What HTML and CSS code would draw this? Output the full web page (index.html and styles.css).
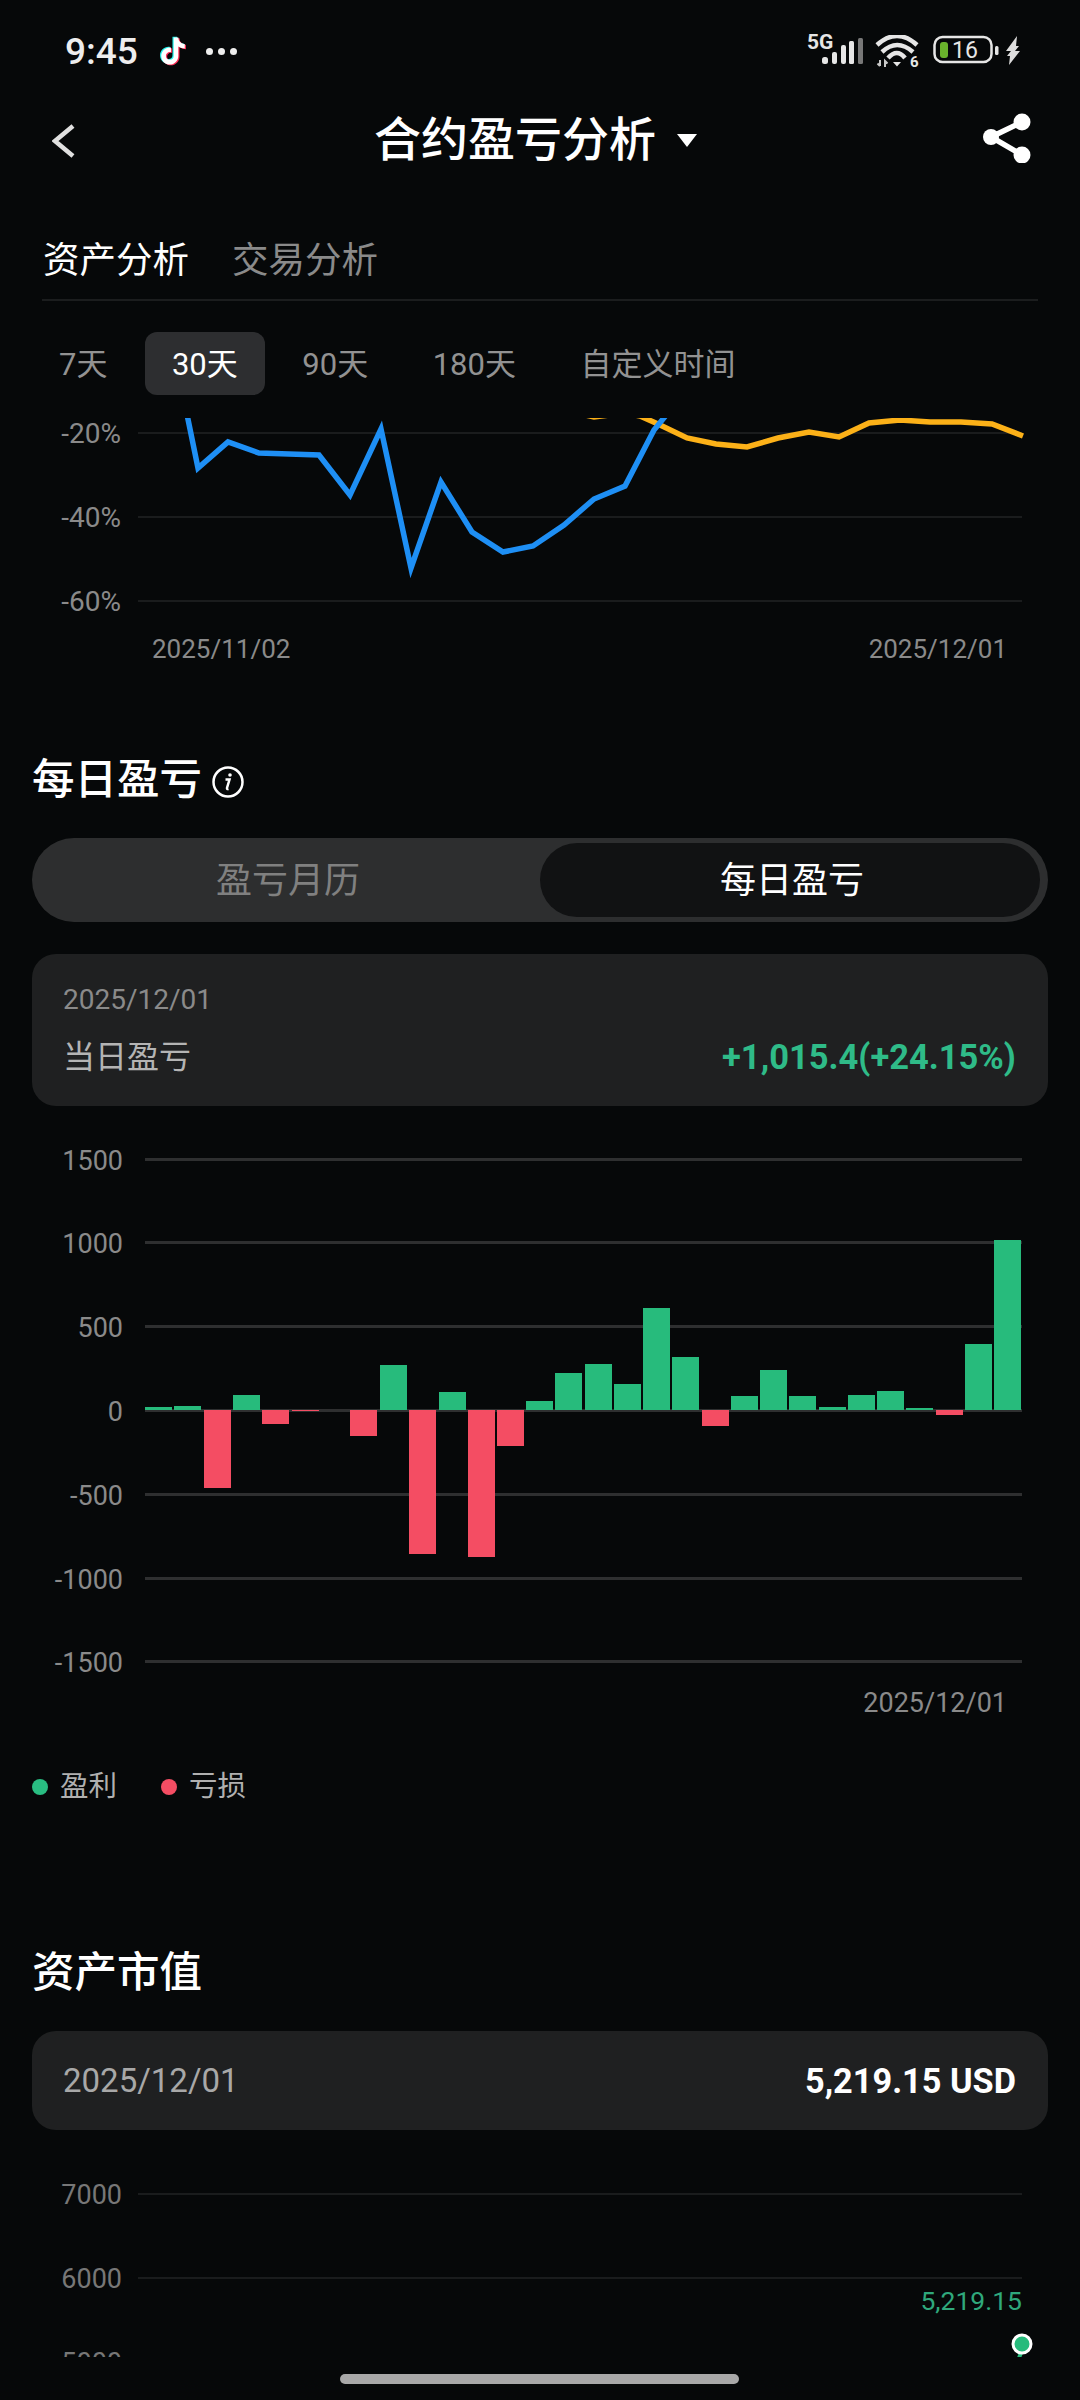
FILE: index.html
```html
<!DOCTYPE html>
<html lang="zh-CN">
<head>
    <meta charset="UTF-8">
    <meta name="viewport" content="width=device-width, initial-scale=1.0">
    <title>合约盈亏分析</title>
    <link rel="stylesheet" href="styles.css">
</head>
<body>
    <div class="status">
        <div class="status-left">
            <span class="clock">9:45</span>
            <svg class="tiktok" viewBox="0 0 24 24" width="36" height="36">
                <path class="tk-cyan" d="M16.6 5.82A4.28 4.28 0 0 1 15.54 3h-3.09v12.4a2.59 2.59 0 0 1-2.59 2.5c-1.42 0-2.6-1.16-2.6-2.6c0-1.72 1.66-3.01 3.37-2.48V9.66c-3.45-.46-6.47 2.22-6.47 5.64c0 3.33 2.76 5.7 5.69 5.7c3.14 0 5.69-2.55 5.69-5.7V9.01a7.35 7.35 0 0 0 4.3 1.38V7.3s-1.88.09-3.24-1.48z" transform="translate(-.8 -.5)"/>
                <path class="tk-red" d="M16.6 5.82A4.28 4.28 0 0 1 15.54 3h-3.09v12.4a2.59 2.59 0 0 1-2.59 2.5c-1.42 0-2.6-1.16-2.6-2.6c0-1.72 1.66-3.01 3.37-2.48V9.66c-3.45-.46-6.47 2.22-6.47 5.64c0 3.33 2.76 5.7 5.69 5.7c3.14 0 5.69-2.55 5.69-5.7V9.01a7.35 7.35 0 0 0 4.3 1.38V7.3s-1.88.09-3.24-1.48z" transform="translate(.8 .5)"/>
                <path class="tk-white" d="M16.6 5.82A4.28 4.28 0 0 1 15.54 3h-3.09v12.4a2.59 2.59 0 0 1-2.59 2.5c-1.42 0-2.6-1.16-2.6-2.6c0-1.72 1.66-3.01 3.37-2.48V9.66c-3.45-.46-6.47 2.22-6.47 5.64c0 3.33 2.76 5.7 5.69 5.7c3.14 0 5.69-2.55 5.69-5.7V9.01a7.35 7.35 0 0 0 4.3 1.38V7.3s-1.88.09-3.24-1.48z"/>
            </svg>
            <span class="dots"><i></i><i></i><i></i></span>
        </div>
        <div class="status-right">
            <svg class="st-signal" viewBox="0 -4 58 38" width="58" height="38">
                <text class="net" x="0" y="16">5G</text>
                <rect class="sig" x="15" y="24" width="6" height="7" rx="2.5"/>
                <rect class="sig" x="25" y="19" width="5" height="12" rx="2"/>
                <rect class="sig" x="34" y="12" width="5" height="19" rx="2"/>
                <rect class="sig" x="42" y="8" width="5" height="23" rx="1.5"/>
                <rect class="sig off" x="51" y="5" width="5" height="26" rx="1.5"/>
            </svg>
            <svg class="st-wifi" viewBox="0 0 44 36" width="44" height="36">
                <path class="wifi" d="M2 10Q22 -8 42 10"/>
                <path class="wifi" d="M7 17Q22 3 38 17"/>
                <path class="wifi" d="M13 23Q22 13 30 23"/>
                <path class="wifi-dot" d="M18 27h8l-4 4.500z"/>
                <path class="wifi-arrow" d="M5 25v6M2.500 28.500L5 31M10 32v-6l2.500 2.500"/>
                <text class="wifi-num" x="35" y="32">6</text>
            </svg>
            <svg class="st-batt" viewBox="0 0 66 30" width="66" height="30">
                <rect class="batt" x="1.500" y="2" width="57" height="25" rx="8"/>
                <rect class="batt-fill" x="7" y="7" width="8" height="16" rx="3"/>
                <text class="batt-num" x="19" y="23">16</text>
                <rect class="batt-cap" x="62" y="11" width="3.500" height="9" rx="1.500"/>
            </svg>
            <svg class="st-bolt" viewBox="0 0 17 29" width="17" height="29">
                <path class="bolt" d="M12 0L1 15h5l-4 5h3l-1 9 11-14h-5l4-5h-3z"/>
            </svg>
        </div>
    </div>

    <div class="nav">
        <svg class="nav-back" viewBox="0 0 24 34" width="24" height="34"><path d="M21 2L3 17l18 15"/></svg>
        <div class="nav-title">
            <h1>合约盈亏分析</h1>
            <span class="caret"></span>
        </div>
        <svg class="nav-share" viewBox="0 0 48 50" width="48" height="50">
            <path d="M39 9L8 24l31 18"/>
            <circle cx="39" cy="9" r="8.500"/>
            <circle cx="8" cy="24" r="8"/>
            <circle cx="39" cy="42" r="8.500"/>
        </svg>
    </div>

    <div class="tabs">
        <span class="tab active">资产分析</span>
        <span class="tab">交易分析</span>
    </div>

    <div class="ranges">
        <span class="range">7天</span>
        <span class="range active">30天</span>
        <span class="range">90天</span>
        <span class="range">180天</span>
        <span class="range">自定义时间</span>
    </div>

    <!-- yield curve -->
    <div class="plot trend">
        <div class="axis-row first"><span class="axis-label">-20%</span><span class="axis-line"></span></div>
        <div class="axis-row"><span class="axis-label">-40%</span><span class="axis-line"></span></div>
        <div class="axis-row"><span class="axis-label">-60%</span><span class="axis-line"></span></div>
        <svg class="trend-lines" viewBox="0 418 1080 240">
            <polyline class="line-orange" points="564,410 594,417 625,413 640,416 658,424 687,438 716,444 747,447 778,438 809,432 839,437 869,423 900,420 930,422 961,422 992,424 1023,436"/>
            <polyline class="line-blue" points="182,390 198,468 228,442 259,453 289,454 319,455 350,495 381,429 411,568 441,482 472,532 503,552 533,546 564,525 594,499 625,486 654,430 672,408"/>
        </svg>
    </div>
    <div class="trend-dates">
        <span>2025/11/02</span>
        <span>2025/12/01</span>
    </div>

    <h2 class="section-title daily-title">每日盈亏
        <svg class="info" viewBox="0 0 32 32" width="32" height="32">
            <circle cx="16" cy="16" r="14.500"/>
            <path d="M13.500 13.500h4l-2.500 8.500q-.3 1.500 1.500 1"/>
            <circle class="info-dot" cx="18" cy="9" r="1.800"/>
        </svg>
    </h2>

    <div class="toggle">
        <span class="toggle-item first">盈亏月历</span>
        <span class="toggle-item active">每日盈亏</span>
    </div>

    <div class="card day-card">
        <div class="day-date">2025/12/01</div>
        <div class="card-row">
            <span class="day-label">当日盈亏</span>
            <span class="day-value">+1,015.4(+24.15%)</span>
        </div>
    </div>

    <!-- daily bars -->
    <div class="plot bars">
        <div class="axis-row first"><span class="axis-label">1500</span><span class="axis-line"></span></div>
        <div class="axis-row"><span class="axis-label">1000</span><span class="axis-line"></span></div>
        <div class="axis-row"><span class="axis-label">500</span><span class="axis-line"></span></div>
        <div class="axis-row"><span class="axis-label">0</span><span class="axis-line"></span></div>
        <div class="axis-row"><span class="axis-label">-500</span><span class="axis-line"></span></div>
        <div class="axis-row"><span class="axis-label">-1000</span><span class="axis-line"></span></div>
        <div class="axis-row"><span class="axis-label">-1500</span><span class="axis-line"></span></div>
        <svg class="bar-svg" viewBox="0 1106 1080 571">
            <g class="gain">
                <rect x="145" y="1407" width="27" height="3"/>
                <rect x="174" y="1406" width="27" height="4"/>
                <rect x="233" y="1395" width="27" height="15"/>
                <rect x="380" y="1365" width="27" height="45"/>
                <rect x="439" y="1392" width="27" height="18"/>
                <rect x="526" y="1401" width="27" height="9"/>
                <rect x="555" y="1373" width="27" height="37"/>
                <rect x="585" y="1364" width="27" height="46"/>
                <rect x="614" y="1384" width="27" height="26"/>
                <rect x="643" y="1308" width="27" height="102"/>
                <rect x="672" y="1357" width="27" height="53"/>
                <rect x="731" y="1396" width="27" height="14"/>
                <rect x="760" y="1370" width="27" height="40"/>
                <rect x="789" y="1396" width="27" height="14"/>
                <rect x="819" y="1407" width="27" height="3"/>
                <rect x="848" y="1395" width="27" height="15"/>
                <rect x="877" y="1391" width="27" height="19"/>
                <rect x="906" y="1408" width="27" height="2"/>
                <rect x="965" y="1344" width="27" height="66"/>
                <rect x="994" y="1240" width="27" height="170"/>
            </g>
            <g class="loss">
                <rect x="204" y="1410" width="27" height="78"/>
                <rect x="262" y="1410" width="27" height="14"/>
                <rect x="292" y="1410" width="27" height="1"/>
                <rect x="350" y="1410" width="27" height="26"/>
                <rect x="409" y="1410" width="27" height="144"/>
                <rect x="468" y="1410" width="27" height="147"/>
                <rect x="497" y="1410" width="27" height="36"/>
                <rect x="702" y="1410" width="27" height="16"/>
                <rect x="936" y="1410" width="27" height="5"/>
            </g>
        </svg>
    </div>
    <div class="bars-date">2025/12/01</div>

    <div class="legend">
        <span class="legend-item"><i class="legend-dot green"></i>盈利</span>
        <span class="legend-item"><i class="legend-dot red"></i>亏损</span>
    </div>

    <h2 class="section-title value-title">资产市值</h2>

    <div class="card value-card">
        <span class="value-date">2025/12/01</span>
        <span class="value-amount">5,219.15 USD</span>
    </div>

    <!-- asset value -->
    <div class="plot worth">
        <div class="axis-row first"><span class="axis-label">7000</span><span class="axis-line"></span></div>
        <div class="axis-row"><span class="axis-label">6000</span><span class="axis-line"></span></div>
        <div class="axis-row"><span class="axis-label">5000</span><span class="axis-line"></span></div>
        <span class="worth-tip">5,219.15</span>
        <svg class="worth-dot" viewBox="0 0 30 36" width="30" height="36">
            <path d="M15 20l-6 16"/>
            <circle cx="15" cy="14" r="9"/>
        </svg>
    </div>

    <div class="home-bar"></div>
</body>
</html>
```

FILE: styles.css
```css
* {
    box-sizing: border-box;
}
html, body {
    margin: 0;
    padding: 0;
}
body {
    width: 1080px;
    height: 2400px;
    position: relative;
    overflow: hidden;
    background-color: #060809;
    color: #fff;
    font-family: Roboto, "Noto Sans CJK SC", sans-serif;
}

/* status bar */
.status {
    height: 100px;
    display: flex;
    justify-content: space-between;
    align-items: center;
    padding: 0 58px 0 65px;
}
.status-left {
    display: flex;
    align-items: center;
    padding-top: 2px;
}
.clock {
    font-size: 37px;
    font-weight: 500;
    color: #eee;
}
.tiktok {
    margin-left: 17px;
}
.tk-cyan {
    fill: #25f4ee;
}
.tk-red {
    fill: #fe2c55;
}
.tk-white {
    fill: #fff;
}
.dots {
    display: flex;
    gap: 5px;
    margin-left: 15px;
}
.dots i {
    width: 7px;
    height: 7px;
    border-radius: 50%;
    background-color: #eee;
}
.status-right {
    display: flex;
    align-items: center;
}
.st-signal {
    margin-bottom: 4px;
}
.st-wifi {
    margin: 6px 0 0 10px;
}
.st-batt {
    margin-left: 14px;
}
.st-bolt {
    margin-left: 6px;
}
.net {
    font-family: Roboto, sans-serif;
    font-size: 21px;
    font-weight: 700;
    fill: #e6e6e6;
}
.sig {
    fill: #e6e6e6;
}
.sig.off {
    fill: #777;
}
.wifi {
    fill: none;
    stroke: #e6e6e6;
    stroke-width: 4.5;
}
.wifi-dot {
    fill: #e6e6e6;
}
.wifi-arrow {
    fill: none;
    stroke: #c8c8c8;
    stroke-width: 2;
}
.wifi-num {
    font-family: Roboto, sans-serif;
    font-size: 15px;
    font-weight: 700;
    fill: #e6e6e6;
}
.batt {
    fill: none;
    stroke: #e6e6e6;
    stroke-width: 2.5;
}
.batt-fill {
    fill: #6ab42c;
}
.batt-num {
    font-family: Roboto, sans-serif;
    font-size: 23px;
    fill: #e6e6e6;
}
.batt-cap {
    fill: #e6e6e6;
}
.bolt {
    fill: #ddd;
}

/* nav */
.nav {
    height: 80px;
    display: grid;
    grid-template-columns: 1fr auto 1fr;
    align-items: center;
    padding: 0 49px 0 52px;
}
.nav-back {
    margin-top: 2px;
    fill: none;
    stroke: #e0e0e0;
    stroke-width: 4.5;
}
.nav-title {
    display: flex;
    align-items: center;
    gap: 21px;
    margin-right: 12px;
}
.nav-title h1 {
    margin: 0;
    font-size: 47px;
    font-weight: 500;
    line-height: 60px;
}
.caret {
    width: 0;
    height: 0;
    border-left: 10px solid transparent;
    border-right: 10px solid transparent;
    border-top: 13px solid #fff;
}
.nav-share {
    justify-self: end;
    margin-top: -4px;
    fill: #fff;
}
.nav-share path {
    fill: none;
    stroke: #fff;
    stroke-width: 5.5;
}

/* tabs */
.tabs {
    display: flex;
    gap: 43px;
    margin: 0 42px;
    padding: 56px 0 13px 1px;
    border-bottom: 2px solid #1b1d1e;
}
.tab {
    font-size: 36.5px;
    line-height: 50px;
    color: #8a8a8a;
}
.tab.active {
    color: #fff;
}
.ranges {
    display: flex;
    gap: 10.5px;
    height: 63px;
    margin-top: 31px;
    padding-left: 32px;
}
.range {
    padding: 0 27px;
    border-radius: 12px;
    font-size: 31px;
    line-height: 66px;
    color: #929292;
}
.range.active {
    background-color: #2d2e30;
    color: #fff;
}

/* charts */
.plot {
    position: relative;
}
.axis-row {
    display: flex;
    align-items: flex-end;
    height: 84px;
    padding-right: 58px;
}
.axis-label {
    width: 121px;
    height: 30px;
    font-size: 28px;
    line-height: 32px;
    text-align: right;
    color: #8a8a8a;
}
.axis-line {
    flex: 1;
    height: 2px;
    margin: 0 0 14px 17px;
    background-color: #1a1c1d;
}
.trend .first {
    height: 53px;
}
.trend-lines {
    position: absolute;
    left: 0;
    top: 23px;
    width: 1080px;
    height: 240px;
}
.trend-lines polyline {
    fill: none;
    stroke-width: 5.5;
    stroke-miterlimit: 8;
}
.line-blue {
    stroke: #1e8ff5;
}
.line-orange {
    stroke: #fcb118;
}
.trend-dates {
    display: flex;
    justify-content: space-between;
    margin-top: 17.5px;
    padding: 0 73px 0 152px;
    font-size: 26px;
    line-height: 30px;
    color: #8a8a8a;
}

.section-title {
    display: flex;
    align-items: center;
    margin: 0;
    padding-left: 32px;
    font-size: 42.5px;
    font-weight: 500;
    line-height: 60px;
}
.daily-title {
    margin-top: 86px;
}
.info {
    margin: 4px 0 0 10px;
    fill: none;
    stroke: #fff;
    stroke-width: 2.5;
}
.info-dot {
    fill: #fff;
    stroke: none;
}

.toggle {
    display: flex;
    align-items: center;
    height: 84px;
    margin: 28.5px 32px 0;
    border-radius: 42px;
    background-color: #2d2e2f;
}
.toggle-item {
    height: 74px;
    padding: 2px 0 0 4px;
    text-align: center;
    font-size: 36px;
    line-height: 72px;
    color: #808080;
}
.toggle-item.first {
    width: 508px;
}
.toggle-item.active {
    width: 500px;
    border-radius: 37px;
    background-color: #111213;
    color: #fff;
}

.card {
    margin: 0 32px;
    border-radius: 24px;
    background-color: #1f2021;
}
.day-card {
    height: 152px;
    margin-top: 31.5px;
    padding: 31px 32px 0 31px;
}
.day-date {
    font-size: 28px;
    line-height: 30px;
    color: #8a8a8a;
}
.card-row {
    display: flex;
    justify-content: space-between;
    margin-top: 19px;
    line-height: 46px;
}
.day-label {
    font-size: 32px;
    color: #b4b4b4;
}
.day-value {
    font-size: 34.5px;
    font-weight: 700;
    color: #2fbb88;
}

.bars .first {
    height: 68px;
}
.bars .axis-row:not(.first) {
    height: 83.83px;
}
.bars .axis-label {
    width: 123px;
    font-size: 27px;
    line-height: 35px;
}
.bars .axis-line {
    height: 3px;
    margin: 0 0 13px 22px;
    background-color: #2e2f30;
}
.bar-svg {
    position: absolute;
    left: 0;
    top: 0;
    width: 1080px;
    height: 571px;
}
.gain {
    fill: #27bb7c;
}
.loss {
    fill: #f44d63;
}
.bars-date {
    margin-top: 12px;
    padding-right: 73px;
    text-align: right;
    font-size: 27px;
    line-height: 30px;
    color: #8a8a8a;
}

.legend {
    display: flex;
    gap: 44px;
    margin-top: 49px;
    padding-left: 32px;
}
.legend-item {
    display: flex;
    align-items: center;
    gap: 12px;
    font-size: 28.5px;
    line-height: 40px;
    color: #b0b0b0;
}
.legend-dot {
    width: 16px;
    height: 16px;
    border-radius: 50%;
}
.legend-dot.green {
    background-color: #29bd82;
}
.legend-dot.red {
    background-color: #f44d63;
}

.value-title {
    margin-top: 136px;
}
.value-card {
    display: flex;
    justify-content: space-between;
    align-items: center;
    height: 99px;
    margin-top: 28px;
    padding: 0 32px 0 31px;
}
.value-date {
    font-size: 33px;
    color: #a8a8a8;
}
.value-amount {
    font-size: 34.3px;
    font-weight: 700;
}

.worth {
    height: 227px;
    overflow: hidden;
}
.worth .first {
    height: 79px;
}
.worth .axis-label {
    width: 122px;
    font-size: 27px;
    color: #777;
}
.worth .axis-line {
    margin-left: 16px;
}
.worth-tip {
    position: absolute;
    right: 58px;
    top: 156px;
    font-size: 26.5px;
    line-height: 30px;
    color: #2fa87c;
}
.worth-dot {
    position: absolute;
    left: 1007px;
    top: 200px;
    fill: #27bb7c;
    stroke: #fff;
    stroke-width: 3;
}
.worth-dot path {
    fill: none;
    stroke: #27bb7c;
    stroke-width: 4;
}

.home-bar {
    position: absolute;
    left: 340px;
    top: 2374px;
    width: 399px;
    height: 10px;
    border-radius: 5px;
    background-color: #a8a8a8;
}
```
